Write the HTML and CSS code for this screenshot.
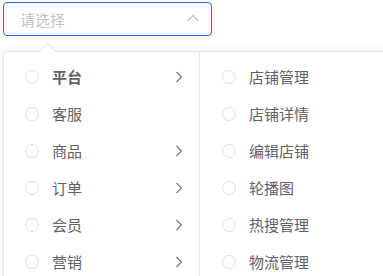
FILE: index.html
```html
<!DOCTYPE html>
<html lang="zh">
<head>
<meta charset="utf-8">
<link rel="stylesheet" href="styles.css">
</head>
<body>
<div class="wrap">
  <div class="input">
    <span class="placeholder">请选择</span>
    <svg class="caret" width="14" height="8" viewBox="0 0 14 8"><path d="M1.5 7 L7 1.5 L12.5 7" fill="none" stroke="#c0c4cc" stroke-width="1.3"/></svg>
  </div>
  <div class="panel">
    <span class="arrow"></span>
    <ul class="menu left">
      <li class="node active"><span class="radio"></span><span class="label">平台</span><svg class="chev" width="8" height="12" viewBox="0 0 8 12"><path d="M1.5 1 L6.5 6 L1.5 11" fill="none" stroke="#707277" stroke-width="1.1"/></svg></li>
      <li class="node"><span class="radio"></span><span class="label">客服</span></li>
      <li class="node"><span class="radio"></span><span class="label">商品</span><svg class="chev" width="8" height="12" viewBox="0 0 8 12"><path d="M1.5 1 L6.5 6 L1.5 11" fill="none" stroke="#707277" stroke-width="1.1"/></svg></li>
      <li class="node"><span class="radio"></span><span class="label">订单</span><svg class="chev" width="8" height="12" viewBox="0 0 8 12"><path d="M1.5 1 L6.5 6 L1.5 11" fill="none" stroke="#707277" stroke-width="1.1"/></svg></li>
      <li class="node"><span class="radio"></span><span class="label">会员</span><svg class="chev" width="8" height="12" viewBox="0 0 8 12"><path d="M1.5 1 L6.5 6 L1.5 11" fill="none" stroke="#707277" stroke-width="1.1"/></svg></li>
      <li class="node"><span class="radio"></span><span class="label">营销</span><svg class="chev" width="8" height="12" viewBox="0 0 8 12"><path d="M1.5 1 L6.5 6 L1.5 11" fill="none" stroke="#707277" stroke-width="1.1"/></svg></li>
    </ul>
    <ul class="menu right">
      <li class="node"><span class="radio"></span><span class="label">店铺管理</span></li>
      <li class="node"><span class="radio"></span><span class="label">店铺详情</span></li>
      <li class="node"><span class="radio"></span><span class="label">编辑店铺</span></li>
      <li class="node"><span class="radio"></span><span class="label">轮播图</span></li>
      <li class="node"><span class="radio"></span><span class="label">热搜管理</span></li>
      <li class="node"><span class="radio"></span><span class="label">物流管理</span></li>
    </ul>
  </div>
</div>
</body>
</html>
```
FILE: styles.css
```css
html, body {
  margin: 0;
  padding: 0;
  overflow: hidden;
  background: #fff;
  font-family: "Noto Sans CJK SC", "Noto Sans", sans-serif;
}
.wrap {
  padding: 2px 3px;
  width: 420px;
}
.input {
  box-sizing: border-box;
  width: 209px;
  height: 34px;
  border: 1px solid #2369d9;
  border-radius: 4px;
  display: flex;
  align-items: center;
  justify-content: space-between;
  padding: 0 11px 0 16px;
}
.placeholder {
  color: #c0c4cc;
  font-size: 15px;
}
.caret {
  display: block;
  margin-top: -2px;
}
.panel {
  position: relative;
  margin-top: 15px;
  display: flex;
  border: 1px solid #e4e7ed;
  border-radius: 4px;
  background: #fff;
  box-shadow: 0 2px 12px rgba(0, 0, 0, 0.1);
}
.arrow {
  position: absolute;
  top: -7px;
  left: 38px;
  width: 10px;
  height: 10px;
  background: #fff;
  border-left: 1px solid #e4e7ed;
  border-top: 1px solid #e4e7ed;
  transform: rotate(45deg);
}
.menu {
  list-style: none;
  margin: 0;
  padding: 6px 0;
  width: 196px;
  box-sizing: border-box;
}
.menu.left {
  border-right: 1px solid #e4e7ed;
}
.node {
  display: flex;
  align-items: center;
  height: 37px;
  padding: 0 16px 0 21px;
  color: #606266;
  font-size: 15px;
}
.menu.right .node {
  padding-left: 22px;
}
.radio {
  box-sizing: border-box;
  width: 14px;
  height: 14px;
  border: 1px solid #dcdfe6;
  border-radius: 50%;
  margin-right: 13px;
  flex: none;
}
.label {
  flex: 1;
}
.active .label {
  font-weight: bold;
}
.chev {
  display: block;
  flex: none;
}
```
